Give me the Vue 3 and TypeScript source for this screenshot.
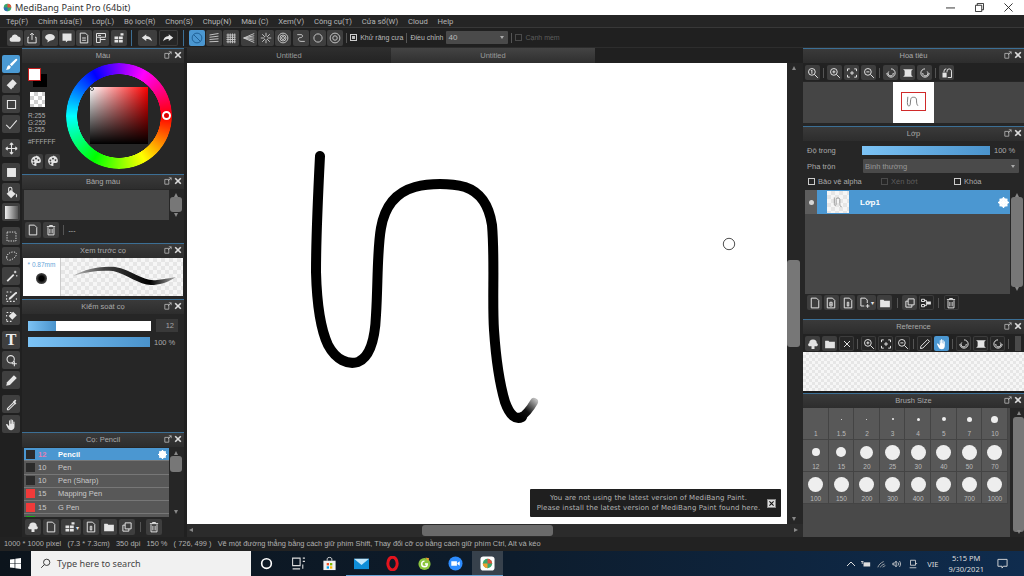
<script setup lang="ts">
import { h } from 'vue'

type IconDef = { f?: string; s?: string; dash?: boolean }
const icons: Record<string, IconDef> = {
  brush: { f: 'M14 1c1 0 1.5 1 1 1.7L8.2 10 6 7.8 13 1.3zM5.2 8.8l2 2c-.5 2.7-3 4.2-6.2 3.7 1.6-1 1-2.2 2-4 .4-1 1.200-1.700 2.200-1.700z' },
  eraser: { f: 'M9.500 1.500 14.500 6.500 7.500 14 2 9z', s: 'M5 6l5.500 5.500' },
  rect: { s: 'M3 3h10v10H3z' },
  check: { s: 'M1.500 8.500 6 13 14.500 3', },
  move: { s: 'M8 1v14M1 8h14M8 1 6 3.500M8 1l2 2.500M8 15l-2-2.500M8 15l2-2.500M1 8l2.500-2M1 8l2.500 2M15 8l-2.500-2M15 8l-2.500 2' },
  fillrect: { f: 'M2.500 2.500h11v11h-11z' },
  bucket: { f: 'M7 5 13 9.500 7.500 15 2 9.500z', s: 'M4.500 7V3.500a2 2 0 0 1 4 0V8M13.500 10c1 1.500 1.200 3 0 3.500' },
  grad: { f: 'M2 2h12v12H2z' },
  dotrect: { s: 'M2.500 2.500h11v11h-11z', dash: true },
  dotlasso: { s: 'M2 9c0-3 3-6 7-6.500 3-.4 5.500.5 5 3-.5 3-4 6-8 7-3 .5-4-1-4-3.500z', dash: true },
  wand: { f: 'M2 13 10 5l1.500 1.500-8 8z', s: 'M12.500 1v3M11 2.500h3M14.500 6v2' },
  selpen: { s: 'M2 2.500h2M6 2.500h2M2 6v2M2 10v2M2 14h2M6 14h2M10 14h2M14 10v2M14 2.500v2', f: 'M13 2.500 14.500 4 7 11.500 4.500 12l.5-2.500z' },
  seler: { s: 'M2 3h2M6 3h2M2 6v2M2 11v2M2 14h2M6 14h2', f: 'M10 2l4.500 4.500L9 12 4.500 7.500z' },
  shapesel: { s: 'M7 2a4.500 4.500 0 1 0 0 9 4.500 4.500 0 1 0 0-9zM11.500 9v6M8.500 12h6' },
  blur: { f: 'M11 1.500 14.500 5 6 13.500 1.500 14.500 2.500 10z' },
  drop: { s: 'M11 5 3 13v1.500H4.500L12.500 6.500', f: 'M9.500 5 11 3.500 12 2.500c1-1 2.500.5 1.500 1.500l-1 1L14 6.500 12.500 8z' },
  hand: { f: 'M5 7V3.500c0-1 1.300-1 1.300 0V7h.5V2.200c0-1 1.400-1 1.400 0V7h.5V3c0-1 1.300-1 1.300 0v4.500h.4V5c0-1 1.300-1 1.300 0v5.500c0 2.500-1.500 4.500-4 4.500s-3.500-1-4.500-3L1.500 8.500c-.5-1 .8-1.700 1.500-.8L5 10z' },
  cloud: { f: 'M4 13a3 3 0 0 1-.5-6 4.500 4.500 0 0 1 8.500-1 3.500 3.500 0 0 1 0 7z' },
  share: { s: 'M4 7H2.500v7.500h11V7H12M8 10.500V2M5.500 4 8 1.500 10.500 4' },
  bubble: { f: 'M8 2.500c3.500 0 6.500 2 6.500 4.500s-3 4.500-6.500 4.500l-3.500 2.500.5-3C3 10 1.500 8.500 1.500 7c0-2.500 3-4.500 6.500-4.500z' },
  chat: { f: 'M2 2h12v9.500H9L6.500 14v-2.500H2z' },
  doc: { s: 'M3 1.500h7l3 3v10H3zM5.500 8h5M5.500 11h5' },
  panel: { s: 'M2 2h12v5H2zM2 7v7h5V7M7 10h7M4 4.500h4' },
  grid2: { f: 'M2 6h5v3.500H2zM8 6h5v3.500H8zM2 10.500h5V14H2zM8 10.500h5V14H8zM10 1.500h4v3h-4z' },
  undo: { f: 'M7 3 1 7.500 7 12V9.300c3 0 5.500.7 7.500 3-.5-4-3-6.800-7.500-7z' },
  redo: { f: 'M9 3l6 4.500L9 12V9.300c-3 0-5.500.7-7.500 3 .5-4 3-6.800 7.500-7z' },
  none: { s: 'M8 1.500a6.500 6.500 0 1 0 0 13 6.500 6.500 0 1 0 0-13zM3.500 3.500l9 9' },
  lines: { s: 'M2 4l12-2M2 7l12-1.500M2 10l12-1M2 13l12-.5' },
  gridr: { s: 'M2 4h12M2 7h12M2 10h12M2 13h12M4 2v13M7 2v13M10 2v13M13 2v13' },
  fan: { s: 'M1 8 15 2M1 8l14-3M1 8h14M1 8l14 3M1 8l14 6' },
  burst: { s: 'M8 1v5M8 10v5M1 8h5M10 8h5M3 3l3.500 3.500M9.500 9.500 13 13M13 3 9.500 6.500M6.500 9.500 3 13' },
  conc: { s: 'M8 1.500a6.500 6.500 0 1 0 0 13 6.500 6.500 0 1 0 0-13zM8 4a4 4 0 1 0 0 8 4 4 0 1 0 0-8zM8 6a2 2 0 1 0 0 4 2 2 0 1 0 0-4z' },
  curve: { s: 'M3 3.500h5c3 0 3 4-1 4s-3 5 1 5h5M3 3.500h.1M13 12.500h.1' },
  ring: { s: 'M8 2.500a5.500 5.500 0 1 0 0 11 5.500 5.500 0 1 0 0-11z' },
  gear: { s: 'M8 1.500a6.500 6.500 0 1 0 0 13 6.500 6.500 0 1 0 0-13zM8 5a3 3 0 1 0 0 6 3 3 0 1 0 0-6z' },
  palette: { f: 'M8 1.500C4 1.500 1.500 4.500 1.500 8s3 6.500 6 6.500c1.500 0 1.500-1 1-2-.5-1.200.2-2 1.500-2h2c1.500 0 2.500-1 2.500-3 0-3.500-3-6.500-6.500-6.500zM4.500 6a1.200 1.200 0 1 0 .01 0zM8 3.500a1.200 1.200 0 1 0 .01 0zM11.300 5.500a1.200 1.200 0 1 0 .01 0zM4.800 9.800a1.200 1.200 0 1 0 .01 0z' },
  page: { s: 'M3 1.500h7l3 3v10H3z' },
  trash: { s: 'M4 4.500v10h8v-10M2.500 3.500h11M6 3.500V2h4v1.500M6.500 6.500v6M9.500 6.500v6' },
  folder: { f: 'M1.500 4V13.500h13V5H7L6 3.500H2z' },
  copy: { s: 'M5.500 2.500h8v8h-8zM5.500 5.500h-3v8h8v-3' },
  up: { f: 'M3 7a5 5 0 0 1 10 0c2 .3 2 4-.5 4H10v3.500H6V11H3.500C1 11 1 7.300 3 7z' },
  zoomfit: { s: 'M6.500 2a4.500 4.500 0 1 0 0 9 4.500 4.500 0 1 0 0-9zM10 10l4.500 4.500M5.500 5l1-1v5' },
  zoomin: { s: 'M6.500 2a4.500 4.500 0 1 0 0 9 4.500 4.500 0 1 0 0-9zM10 10l4.500 4.500M4.500 6.500h4M6.500 4.500v4' },
  zoomout: { s: 'M6.500 2a4.500 4.500 0 1 0 0 9 4.500 4.500 0 1 0 0-9zM10 10l4.500 4.500M4.500 6.500h4' },
  fit: { s: 'M2 5.500V2.500h3M11 2.500h3v3M14 10.500v3h-3M5 13.500H2v-3M5.500 8h5M8 5.500v5' },
  rotl: { s: 'M8 2.500a5.500 5.500 0 1 1-5.500 5.500M5 6a3.500 3.500 0 1 0 6 2' },
  flip: { f: 'M1.500 3h13l-2 2v6l2 2h-13l2-2V5z' },
  rotr: { s: 'M8 2.500a5.500 5.500 0 1 0 5.500 5.500M11 6a3.500 3.500 0 1 1-6 2' },
  flip2: { f: 'M2 7.500h5.500V14H2z', s: 'M9 14h5V5.500a3 3 0 0 0-6 0V7M4 7V5.500a3 3 0 0 1 3-3' },
  layer: { s: 'M3 1.500h7l3 3v10H3z M7 7l2 0v5H7z' },
  layer8: { s: 'M3 1.500h7l3 3v10H3zM6.500 7h3v5h-3zM6.500 9.500h3' },
  layeradd: { s: 'M2.500 1.500h6l2.500 2.500v4M2.500 1.500V12H7M11.500 9.500v5M9 12h5' },
  tree: { s: 'M2 3h4v3H2zM2 10h4v3H2zM6 4.500h2.500v7H6', f: 'M9 6h5.500v4H9z' },
  close: { s: 'M4 4l8 8M12 4l-8 8' },
  pen2: { s: 'M11.500 2 14 4.500 5 13.500 2 14l.5-3z' },
}

const Ico = (props: { n: string }) => {
  const d = icons[props.n] ?? {}
  const kids = []
  if (d.f) kids.push(h('path', { d: d.f, fill: 'currentColor', 'fill-rule': 'evenodd' }))
  if (d.s) kids.push(h('path', { d: d.s, fill: 'none', stroke: 'currentColor', 'stroke-width': d.dash ? 1.1 : 1.3, 'stroke-dasharray': d.dash ? '1.6 1.4' : undefined }))
  return h('svg', { viewBox: '0 0 16 16', class: 'ico' }, kids)
}
Ico.props = ['n']

const menus = ['Tệp(F)', 'Chỉnh sửa(E)', 'Lớp(L)', 'Bộ lọc(R)', 'Chọn(S)', 'Chụp(N)', 'Màu (C)', 'Xem(V)', 'Công cụ(T)', 'Cửa sổ(W)', 'Cloud', 'Help']
const topA = ['cloud', 'share', 'bubble', 'chat', 'doc', 'panel', 'grid2']
const topB = ['none', 'lines', 'gridr', 'fan', 'burst', 'conc', 'curve', 'ring', 'gear']
const toolGroups = [
  ['brush', 'eraser', 'rect', 'check'],
  ['move'],
  ['fillrect', 'bucket', 'grad'],
  ['dotrect', 'dotlasso', 'wand', 'selpen', 'seler'],
  ['T', 'shapesel', 'blur'],
  ['drop', 'hand'],
]
const brushes = [
  { c: '#2b2b2b', n: '12', t: 'Pencil', on: true },
  { c: '#2b2b2b', n: '10', t: 'Pen', on: false },
  { c: '#2b2b2b', n: '10', t: 'Pen (Sharp)', on: false },
  { c: '#f03a3a', n: '15', t: 'Mapping Pen', on: false },
  { c: '#f03a3a', n: '15', t: 'G Pen', on: false },
  { c: '#1ea51e', n: '40', t: 'Edge Pen', on: false },
]
const sizes: [string, number][] = [
  ['1', 0], ['1.5', 1], ['2', 1], ['3', 2], ['4', 3], ['5', 4], ['7', 5], ['10', 7],
  ['12', 8], ['15', 10], ['20', 13], ['25', 15], ['30', 15], ['40', 15], ['50', 15], ['70', 15],
  ['100', 15], ['150', 15], ['200', 15], ['300', 15], ['400', 15], ['500', 15], ['700', 15], ['1000', 15],
]
</script>

<template>
  <div class="app">
    <div class="title">
      <svg class="logo" viewBox="0 0 12 12"><circle cx="6" cy="6" r="5" fill="#3aa76d" /><path d="M6 1a5 5 0 0 1 5 5H6z" fill="#e0533d" /><path d="M1 6a5 5 0 0 0 5 5V6z" fill="#2f6fb5" /></svg>
      <span>MediBang Paint Pro (64bit)</span>
      <div class="winbtns">
        <svg viewBox="0 0 10 10"><path d="M0 5.500h10" stroke="#222" fill="none" /></svg>
        <svg viewBox="0 0 10 10"><path d="M.5 2.500h7v7h-7zM2.500 2.500v-2h7v7h-2" stroke="#222" fill="none" /></svg>
        <svg viewBox="0 0 10 10"><path d="M.5.500l9 9M9.500.500l-9 9" stroke="#222" fill="none" /></svg>
      </div>
    </div>

    <div class="menu"><span v-for="m in menus" :key="m">{{ m }}</span></div>

    <div class="toolbar">
      <div class="tgroup first"><button v-for="i in topA" :key="i" class="tb"><Ico :n="i" /></button></div>
      <i class="vsep s1" />
      <div class="tgroup undo"><button class="tb wide"><Ico n="undo" /></button><button class="tb wide dark"><Ico n="redo" /></button></div>
      <i class="vsep" />
      <div class="tgroup"><button v-for="(i, k) in topB" :key="i" class="tb lite" :class="{ on: k === 0 }"><Ico :n="i" /></button></div>
      <i class="vsep thin" />
      <span class="chk x" /><span class="tlabel">Khử răng cưa</span>
      <i class="vsep thin" />
      <span class="tlabel">Điều chỉnh</span>
      <div class="select topsel"><span>40</span><b /></div>
      <i class="vsep thin" />
      <span class="chk dim" /><span class="tlabel dimtxt">Cạnh mềm</span>
    </div>

    <div class="body">
      <div class="tools">
        <div v-for="(g, gi) in toolGroups" :key="gi" class="toolgroup">
          <button v-for="t in g" :key="t" class="tool" :class="{ on: t === 'brush' }">
            <span v-if="t === 'T'" class="tee">T</span>
            <span v-else-if="t === 'grad'" class="gradbox" />
            <Ico v-else :n="t" />
          </button>
        </div>
      </div>

      <div class="leftcol">
        <section class="panel p-color">
          <header class="phead">Màu<em class="pctl"><svg viewBox="0 0 10 10"><path d="M1 3h5v6H1V3M6 1l3 0v3M9 1 5 5" fill="none" stroke="#bbb" /></svg><svg viewBox="0 0 10 10"><path d="M1.500 1.500l7 7M8.500 1.500l-7 7" stroke="#ddd" stroke-width="2" /></svg></em></header>
          <div class="colorbody">
            <div class="colorleft">
              <div class="swatches"><span class="bgc" /><span class="fgc" /></div>
              <span class="transp checker" />
              <div class="rgb">R:255<br />G:255<br />B:255</div>
              <div class="hex">#FFFFFF</div>
              <div class="palbtns"><button class="tb"><Ico n="palette" /></button><button class="tb"><Ico n="palette" /></button></div>
            </div>
            <div class="wheel">
              <div class="ring" />
              <div class="sv"><span class="svh" /></div>
              <span class="hue" />
            </div>
          </div>
        </section>

        <section class="panel p-swatch">
          <header class="phead">Bảng màu<em class="pctl"><svg viewBox="0 0 10 10"><path d="M1 3h5v6H1V3M6 1l3 0v3M9 1 5 5" fill="none" stroke="#bbb" /></svg><svg viewBox="0 0 10 10"><path d="M1.500 1.500l7 7M8.500 1.500l-7 7" stroke="#ddd" stroke-width="2" /></svg></em></header>
          <div class="swrow">
            <div class="well" />
            <div class="vbar small"><u class="ua" /><span class="thumb th-sw" /><u class="da" /></div>
          </div>
          <div class="btnrow"><button class="tb"><Ico n="page" /></button><button class="tb"><Ico n="trash" /></button><i class="vsep thin" /><span class="dash">---</span></div>
        </section>

        <section class="panel p-prev">
          <header class="phead">Xem trước cọ<em class="pctl"><svg viewBox="0 0 10 10"><path d="M1 3h5v6H1V3M6 1l3 0v3M9 1 5 5" fill="none" stroke="#bbb" /></svg><svg viewBox="0 0 10 10"><path d="M1.500 1.500l7 7M8.500 1.500l-7 7" stroke="#ddd" stroke-width="2" /></svg></em></header>
          <div class="prev">
            <div class="prevl"><span>* 0.87mm</span><i class="dot" /></div>
            <div class="prevr checker-l">
              <svg viewBox="0 0 122 38">
                <defs><linearGradient id="bg" x1="0" x2="1"><stop offset="0" stop-color="#bbb" /><stop offset=".3" stop-color="#444" /><stop offset=".75" stop-color="#000" /><stop offset="1" stop-color="#aaa" /></linearGradient></defs>
                <path d="M12 18C24 11 40 8 54 9 72 12 82 24 96 22 104 21 110 20 115 19 106 25 98 27 90 27 78 27 66 16 52 13 38 12 24 14 12 18z" fill="url(#bg)" />
              </svg>
            </div>
          </div>
        </section>

        <section class="panel p-ctrl">
          <header class="phead">Kiểm soát cọ<em class="pctl"><svg viewBox="0 0 10 10"><path d="M1 3h5v6H1V3M6 1l3 0v3M9 1 5 5" fill="none" stroke="#bbb" /></svg><svg viewBox="0 0 10 10"><path d="M1.500 1.500l7 7M8.500 1.500l-7 7" stroke="#ddd" stroke-width="2" /></svg></em></header>
          <div class="ctlrow"><div class="slider white"><span style="width: 23%" /></div><span class="valbox">12</span></div>
          <div class="ctlrow"><div class="slider"><span style="width: 100%" /></div><span class="pct">100 %</span></div>
        </section>

        <section class="panel p-brush">
          <header class="phead">Cọ: Pencil<em class="pctl"><svg viewBox="0 0 10 10"><path d="M1 3h5v6H1V3M6 1l3 0v3M9 1 5 5" fill="none" stroke="#bbb" /></svg><svg viewBox="0 0 10 10"><path d="M1.500 1.500l7 7M8.500 1.500l-7 7" stroke="#ddd" stroke-width="2" /></svg></em></header>
          <div class="swrow brushwrap">
            <div class="blist">
              <div v-for="b in brushes" :key="b.t" class="brow" :class="{ on: b.on }">
                <i class="bchip" :style="{ background: b.c }" /><span class="bn">{{ b.n }}</span><span class="bt">{{ b.t }}</span>
                <svg v-if="b.on" class="bgear" viewBox="0 0 10 10"><circle cx="5" cy="5" r="3" fill="none" stroke="#fff" stroke-width="2.200" /><path d="M5 0v10M0 5h10M1.500 1.500l7 7M8.500 1.500l-7 7" stroke="#fff" stroke-width="1.300" /></svg>
              </div>
            </div>
            <div class="vbar small"><u class="ua" /><span class="thumb th-br" /><u class="da" /></div>
          </div>
          <div class="btnrow brow2">
            <button class="tb"><Ico n="up" /></button><button class="tb"><Ico n="page" /></button><button class="tb wide2"><Ico n="grid2" /><small>▾</small></button><button class="tb"><Ico n="layer" /></button><button class="tb"><Ico n="folder" /></button><button class="tb"><Ico n="copy" /></button><i class="vsep thin" /><button class="tb"><Ico n="trash" /></button>
          </div>
        </section>
      </div>

      <div class="center">
        <div class="tabs"><div class="tab">Untitled</div><div class="tab lit">Untitled</div></div>
        <div class="canvasrow">
          <div class="canvas">
            <svg viewBox="187 63 600 461" class="art">
              <defs><linearGradient id="fade" gradientUnits="userSpaceOnUse" x1="520" y1="418" x2="536" y2="400"><stop offset="0" stop-color="#000" /><stop offset=".4" stop-color="#111" /><stop offset="1" stop-color="#bbb" /></linearGradient></defs>
              <path d="M320 156C318 195 316 240 316 272 317 310 321 330 328 345 336 360 348 365 358 362 370 357 375 340 376 315 378 285 377 250 381 228 385 205 397 192 415 187 430 183 450 183 465 187 480 192 489 205 492 225 495 260 492 300 494 330 496 360 500 385 505 402 510 416 516 420 522 417" fill="none" stroke="#000" stroke-width="10" stroke-linecap="round" stroke-linejoin="round" />
              <path d="M520 418C526 414 530 409 534 402" fill="none" stroke="url(#fade)" stroke-width="8" stroke-linecap="round" />
              <circle cx="729" cy="244" r="5.700" fill="none" stroke="#222" stroke-width=".8" />
            </svg>
            <div class="toast">
              <div class="toasttxt">You are not using the latest version of MediBang Paint.<br />Please install the latest version of MediBang Paint found here.</div>
              <span class="toastx"><svg viewBox="0 0 10 10"><path d="M2 2l6 6M8 2l-6 6" stroke="#111" stroke-width="1.500" /></svg></span>
            </div>
          </div>
          <div class="vbar canvasv"><u class="ua" /><span class="thumb th-cv" /><u class="da" /></div>
        </div>
        <div class="hbar"><span class="la" /><span class="hthumb" /><span class="ra" /></div>
      </div>

      <div class="rightcol">
        <section class="panel r-nav">
          <header class="phead">Hoa tiêu<em class="pctl"><svg viewBox="0 0 10 10"><path d="M1 3h5v6H1V3M6 1l3 0v3M9 1 5 5" fill="none" stroke="#bbb" /></svg><svg viewBox="0 0 10 10"><path d="M1.500 1.500l7 7M8.500 1.500l-7 7" stroke="#ddd" stroke-width="2" /></svg></em></header>
          <div class="rtool">
            <button class="tb"><Ico n="zoomfit" /></button><i class="vsep thin" />
            <button class="tb"><Ico n="zoomin" /></button><button class="tb"><Ico n="fit" /></button><button class="tb"><Ico n="zoomout" /></button><i class="vsep thin" />
            <button class="tb"><Ico n="rotl" /></button><button class="tb"><Ico n="flip" /></button><button class="tb"><Ico n="rotr" /></button><i class="vsep thin" />
            <button class="tb"><Ico n="flip2" /></button>
          </div>
          <div class="navview">
            <div class="thumbpage">
              <div class="redbox"><svg viewBox="0 0 24 18"><path d="M6 4 5.500 10c0 4 2 5 3 2.500L9 7c.5-2 1-2.500 3-2.500s3 .5 3.200 3c0 3 .3 5 1.500 6" fill="none" stroke="#777" /></svg></div>
            </div>
          </div>
        </section>

        <section class="panel r-layer">
          <header class="phead">Lớp<em class="pctl"><svg viewBox="0 0 10 10"><path d="M1 3h5v6H1V3M6 1l3 0v3M9 1 5 5" fill="none" stroke="#bbb" /></svg><svg viewBox="0 0 10 10"><path d="M1.500 1.500l7 7M8.500 1.500l-7 7" stroke="#ddd" stroke-width="2" /></svg></em></header>
          <div class="lrow"><span class="ll">Độ trong</span><div class="slider op"><span style="width: 100%" /></div><span class="pct">100 %</span></div>
          <div class="lrow"><span class="ll">Pha trộn</span><div class="select blend"><span>Bình thường</span><b /></div></div>
          <div class="lchecks">
            <span class="lc"><span class="chk" />Bảo vệ alpha</span>
            <span class="lc dimtxt"><span class="chk dim" />Xén bớt</span>
            <span class="lc"><span class="chk" />Khóa</span>
          </div>
          <div class="layerwrap">
            <div class="layers">
              <div class="layerrow">
                <div class="eye"><i /></div>
                <div class="lblue">
                  <div class="lthumb checker-l"><svg viewBox="0 0 24 24"><path d="M8 7v7c0 3 2 2 2 0V9c0-2 4-2 4 0v5c0 2 1 4 2 3" fill="none" stroke="#999" /></svg></div>
                  <b>Lớp1</b>
                  <svg class="lgear" viewBox="0 0 10 10"><circle cx="5" cy="5" r="3" fill="none" stroke="#fff" stroke-width="2.200" /><path d="M5 0v10M0 5h10M1.500 1.500l7 7M8.500 1.500l-7 7" stroke="#fff" stroke-width="1.300" /></svg>
                </div>
              </div>
            </div>
            <div class="vbar lv"><u class="ua" /><span class="thumb th-ly" /><u class="da" /></div>
          </div>
          <div class="btnrow lbtns">
            <button class="tb"><Ico n="page" /></button><button class="tb"><Ico n="layer8" /></button><button class="tb"><Ico n="layer" /></button><button class="tb wide2"><Ico n="layeradd" /><small>▾</small></button><button class="tb"><Ico n="folder" /></button><i class="vsep thin" /><button class="tb"><Ico n="copy" /></button><button class="tb dark"><Ico n="tree" /></button><i class="vsep thin" /><button class="tb dark"><Ico n="trash" /></button>
          </div>
        </section>

        <section class="panel r-ref">
          <header class="phead">Reference<em class="pctl"><svg viewBox="0 0 10 10"><path d="M1 3h5v6H1V3M6 1l3 0v3M9 1 5 5" fill="none" stroke="#bbb" /></svg><svg viewBox="0 0 10 10"><path d="M1.500 1.500l7 7M8.500 1.500l-7 7" stroke="#ddd" stroke-width="2" /></svg></em></header>
          <div class="rtool reft">
            <button class="tb"><Ico n="up" /></button><button class="tb"><Ico n="folder" /></button><button class="tb dark"><Ico n="close" /></button><i class="vsep thin" />
            <button class="tb dark"><Ico n="zoomin" /></button><button class="tb dark"><Ico n="fit" /></button><button class="tb dark"><Ico n="zoomout" /></button><i class="vsep thin" />
            <button class="tb dark"><Ico n="pen2" /></button><button class="tb on"><Ico n="hand" /></button><i class="vsep thin" />
            <button class="tb dark"><Ico n="rotl" /></button><button class="tb dark"><Ico n="flip" /></button><button class="tb dark"><Ico n="rotr" /></button><i class="vsep thin" />
            <span class="refgrip" />
          </div>
          <div class="refview checker-l" />
        </section>

        <section class="panel r-size">
          <header class="phead">Brush Size<em class="pctl"><svg viewBox="0 0 10 10"><path d="M1 3h5v6H1V3M6 1l3 0v3M9 1 5 5" fill="none" stroke="#bbb" /></svg><svg viewBox="0 0 10 10"><path d="M1.500 1.500l7 7M8.500 1.500l-7 7" stroke="#ddd" stroke-width="2" /></svg></em></header>
          <div class="sizewrap">
            <div class="sizebg">
              <div class="sizes">
                <div v-for="s in sizes" :key="s[0]" class="sz">
                  <span class="szd"><i :style="{ width: s[1] + 'px', height: s[1] + 'px' }" /></span>
                  <span class="szl">{{ s[0] }}</span>
                </div>
              </div>
            </div>
            <div class="vbar szv"><u class="ua" /><span class="thumb th-sz" /><u class="da" /></div>
          </div>
        </section>
      </div>
    </div>

    <div class="status">1000 * 1000 pixel &nbsp; (7.3 * 7.3cm) &nbsp; 350 dpi &nbsp; 150 % &nbsp; ( 726, 499 ) &nbsp; Vẽ một đường thẳng bằng cách giữ phím Shift, Thay đổi cỡ cọ bằng cách giữ phím Ctrl, Alt và kéo</div>

    <div class="taskbar">
      <div class="winlogo"><svg viewBox="0 0 12 12"><path d="M0 1.700 5 1v4.600H0zM5.800.9 12 0v5.600H5.800zM0 6.400h5V11L0 10.300zM5.800 6.400H12V12l-6.200-.9z" fill="#fff" /></svg></div>
      <div class="search">
        <svg viewBox="0 0 14 14"><circle cx="8.500" cy="5.500" r="4" fill="none" stroke="#222" stroke-width="1.100" /><path d="M5.500 8.500 1.500 12.500" stroke="#222" stroke-width="1.100" /></svg>
        <span>Type here to search</span>
      </div>
      <div class="apps">
        <span class="app0"><svg viewBox="0 0 14 14"><circle cx="7" cy="7" r="4.500" fill="none" stroke="#fff" stroke-width="1.500" /></svg></span>
        <span class="app0"><svg viewBox="0 0 14 14"><path d="M1.500 2h7v7h-7zM1.500 12h7M11 2h2M11 5h2M11 12V8" fill="none" stroke="#ddd" /></svg></span>
        <span class="app0"><svg viewBox="0 0 16 16"><path d="M1.500 5h13v10h-13z" fill="#f2f2f2" /><path d="M5.500 5V3c0-2 5-2 5 0v2" fill="none" stroke="#ddd" /><path d="M5 7.500h2.500V10H5z" fill="#f25022" /><path d="M8.500 7.500H11V10H8.500z" fill="#7fba00" /><path d="M5 11h2.500v2.500H5z" fill="#00a4ef" /><path d="M8.500 11H11v2.500H8.500z" fill="#ffb900" /></svg></span>
        <span class="app0 run"><svg viewBox="0 0 16 16"><path d="M0 3h16v11H0z" fill="#0f8ed8" /><path d="M0 3h16L8 9.500z" fill="#bfe6fb" /></svg></span>
        <span class="app0 run"><svg viewBox="0 0 16 16"><ellipse cx="8" cy="8" rx="5" ry="6.800" fill="none" stroke="#e3141e" stroke-width="3.200" /></svg></span>
        <span class="app0 run"><svg viewBox="0 0 16 16"><circle cx="8" cy="8.500" r="6.500" fill="#8cc63f" /><path d="M8 5.500a3 3 0 1 0 3 3H8.500" fill="none" stroke="#fff" stroke-width="1.500" /><path d="M9 1.500l4 1-1 3z" fill="#f0a030" /></svg></span>
        <span class="app0 run"><svg viewBox="0 0 16 16"><circle cx="8" cy="8" r="7.500" fill="#2d8cff" /><path d="M3.500 5.500h6v5h-6zM10 7.500l2.500-1.800v4.600L10 8.500z" fill="#fff" /></svg></span>
        <span class="app0 run act"><svg viewBox="0 0 16 16"><rect x="0.500" y="0.500" width="15" height="15" rx="3" fill="#fff" /><circle cx="8" cy="8" r="5" fill="#3aa76d" /><path d="M8 3a5 5 0 0 1 5 5H8z" fill="#e0533d" /><path d="M3 8a5 5 0 0 0 5 5V8z" fill="#f0a030" /></svg></span>
      </div>
      <div class="tray">
        <svg class="tr" viewBox="0 0 10 10"><path d="M1 7l4-4 4 4" fill="none" stroke="#ddd" /></svg>
        <svg class="tr" viewBox="0 0 12 10"><path d="M3 3h8v5H3z" fill="#ddd" /><path d="M0 2h3M1.500 2v3" stroke="#ddd" /></svg>
        <svg class="tr" viewBox="0 0 12 10"><path d="M1 9c1-3 3-5 7-7M4 9c1-2 2-3 5-4M7 9c0-1 1-1 3-2" fill="none" stroke="#bbb" /></svg>
        <svg class="tr" viewBox="0 0 12 10"><path d="M1 4h2l2-2.500v7L3 6H1zM7 3c1 1 1 3 0 4M9 1.500c1.500 2 1.500 5 0 7" fill="none" stroke="#ddd" /></svg>
        <svg class="tr" viewBox="0 0 10 12"><path d="M2 1.500h6v6H2zM1 10.500h8M8 5.500h2" fill="none" stroke="#ddd" /></svg>
        <span class="lang">VIE</span>
        <div class="clock"><span>5:15 PM</span><span>9/30/2021</span></div>
        <svg class="note" viewBox="0 0 12 12"><path d="M1 1.500h10v7.500H7L5.500 11V9H1z" fill="none" stroke="#ddd" /></svg>
      </div>
    </div>
  </div>
</template>

<style>
html, body { margin: 0; padding: 0; background: #1e1e1e; }
</style>

<style scoped>
.app { width: 1024px; height: 576px; overflow: hidden; display: flex; flex-direction: column; font-family: "Liberation Sans", Arial, sans-serif; font-size: 8px; color: #b9b9b9; background: #202020; }
button { padding: 0; border: 0; font: inherit; color: inherit; display: flex; align-items: center; justify-content: center; }
.ico { width: 12px; height: 12px; display: block; }
i, em, u { font-style: normal; text-decoration: none; display: block; }

.title { height: 15px; background: #fff; display: flex; align-items: center; padding-left: 3px; gap: 3px; color: #333; font-size: 9.200px; flex: none; font-family: "Noto Sans", sans-serif; }
.logo { width: 9px; height: 9px; }
.winbtns { margin-left: auto; display: flex; gap: 20px; margin-right: 11px; }
.winbtns svg { width: 9px; height: 9px; display: block; }

.menu { height: 12px; flex: none; background: #252525; border-bottom: 1px solid #383838; display: flex; align-items: center; gap: 9.800px; padding-left: 6px; font-family: Roboto, sans-serif; font-size: 7.700px; color: #b5b5b5; white-space: nowrap; }

.toolbar { height: 19px; flex: none; background: #202020; display: flex; align-items: center; padding-left: 6px; white-space: nowrap; border-bottom: 1px solid #2d2d2d; }
.tgroup { display: flex; gap: 1.300px; }
.tgroup.first { padding-left: 1px; }
.tgroup.undo { gap: 2px; }
.tb { width: 16px; height: 16px; background: #3e3e3e; color: #e4e4e4; border-radius: 2px; flex: none; }
.tb.lite { color: #c4c4c4; }
.tb.wide { width: 19px; }
.tb.dark { background: #262626; box-shadow: inset 0 0 0 1px #3c3c3c; }
.tb.on { background: #4b97d1; color: #1f5f94; }
.r-ref .tb.on { color: #fff; }
.tb.wide2 { width: 20px; gap: 0; }
.tb.wide2 small { font-size: 6px; }
.vsep { width: 1px; height: 16px; background: #3d6e93; margin: 0 5px; flex: none; }
.vsep.s1 { margin: 0 6px 0 4px; }
.vsep.thin { height: 10px; background: #555; margin: 0 3px; }
.chk { width: 7px; height: 7px; border: 1px solid #ccc; display: inline-block; flex: none; box-sizing: border-box; margin: 0 3px; }
.toolbar .chk { margin: 0 3px 0 0; }
.chk.x { background: linear-gradient(#bbb, #bbb) center / 3px 3px no-repeat; }
.chk.dim { border-color: #4a4a4a; }
.tlabel { font-size: 7px; color: #bbb; }
.dimtxt { color: #5d5d5d !important; }
.select { background: #4a4a4a; display: flex; align-items: center; justify-content: space-between; padding: 0 4px 0 2px; border-radius: 1px; position: relative; box-sizing: border-box; }
.select b { width: 0; height: 0; border-left: 2.500px solid transparent; border-right: 2.500px solid transparent; border-top: 3px solid #aaa; }
.topsel { width: 62px; height: 13px; margin-left: 3px; }

.body { flex: 1; min-height: 0; display: flex; }
.tools { width: 22px; flex: none; padding: 7px 0 0 2px; box-sizing: border-box; display: flex; flex-direction: column; gap: 6px; }
.toolgroup { display: flex; flex-direction: column; gap: 2px; }
.tool { width: 18px; height: 18px; background: #3f3f3f; color: #e6e6e6; border-radius: 2px; }
.tool.on { background: #4a9ad4; color: #fff; }
.tool .ico { width: 13px; height: 13px; }
.tee { font-family: "Liberation Serif", serif; font-weight: 700; font-size: 16px; line-height: 18px; color: #eee; }
.gradbox { width: 13px; height: 13px; background: linear-gradient(90deg, #eee, #555); }

.leftcol { width: 162px; flex: none; display: flex; flex-direction: column; }
.panel { border-top: 1px solid #3c6f95; background: #262626; box-sizing: border-box; position: relative; flex: none; }
.phead { height: 14px; background: linear-gradient(#3a3a3a, #2d2d2d); text-align: center; line-height: 14px; font-size: 7.500px; font-weight: 400; color: #a9a9a9; position: relative; }
.pctl { position: absolute; right: 2px; top: 2px; display: flex; gap: 2px; }
.pctl svg { width: 8px; height: 8px; display: block; }

.p-color { height: 126px; }
.colorbody { display: flex; padding: 0 0 0 6px; }
.colorleft { width: 38px; flex: none; padding-top: 5px; }
.swatches { position: relative; width: 20px; height: 20px; }
.fgc { position: absolute; left: 0; top: 0; width: 13px; height: 13px; background: #fff; border: 1.500px solid #c61f1f; box-sizing: border-box; }
.bgc { position: absolute; left: 5px; top: 6px; width: 14px; height: 13px; background: #000; }
.transp { display: block; width: 15px; height: 15px; margin: 4px 0 0 2px; }
.checker { background: repeating-conic-gradient(#cfcfcf 0 25%, #fff 0 50%) 0 0 / 8px 8px; }
.checker-l { background: repeating-conic-gradient(#e6e6e6 0 25%, #f6f6f6 0 50%) 0 0 / 8px 8px; }
.rgb { font-size: 6.500px; line-height: 7.200px; margin-top: 5px; color: #aaa; }
.hex { font-size: 6.500px; margin-top: 4px; color: #aaa; line-height: 8px; }
.palbtns { display: flex; gap: 2px; margin-top: 8px; }
.palbtns .tb { width: 15px; height: 15px; }
.wheel { position: relative; width: 106px; height: 106px; flex: none; }
.ring { position: absolute; inset: 0; border-radius: 50%; background: conic-gradient(from 90deg, #f00, #ff0 60deg, #0f0 120deg, #0ff 180deg, #00f 240deg, #f0f 300deg, #f00 360deg); -webkit-mask: radial-gradient(circle, transparent 41.500px, #000 42px); mask: radial-gradient(circle, transparent 41.500px, #000 42px); }
.sv { position: absolute; left: 24px; top: 24px; width: 58px; height: 57px; background: linear-gradient(transparent, #000), linear-gradient(90deg, #fff, #f00); }
.svh { position: absolute; left: 0; top: 0; width: 4px; height: 4px; border-radius: 50%; border: 1px solid #555; box-sizing: border-box; background: #fff; }
.hue { position: absolute; right: 1px; top: 48px; width: 9px; height: 9px; border-radius: 50%; border: 2px solid #fff; box-sizing: border-box; background: #d00; }

.p-swatch { height: 69px; }
.swrow { display: flex; padding: 1px 2px 0 2px; gap: 1px; }
.well { width: 146px; height: 30px; background: #474747; }
.vbar { background: #262626; position: relative; display: flex; flex-direction: column; align-items: center; }
.vbar.small { width: 12px; height: 30px; }
.ua, .da { width: 0; height: 0; border-left: 2.500px solid transparent; border-right: 2.500px solid transparent; position: absolute; }
.ua { top: 3px; border-bottom: 4px solid #888; }
.da { bottom: 3px; border-top: 4px solid #888; }
.thumb { position: absolute; left: 0; right: 0; background: #777; border-radius: 3px; }
.th-sw { top: 7px; height: 15px; }
.btnrow { display: flex; align-items: center; gap: 1.500px; padding: 2px 0 0 3px; }
.dash { font-size: 7px; color: #bbb; }

.p-prev { height: 56px; }
.prev { margin: 0 1px; height: 38px; display: flex; background: #fff; }
.prevl { width: 38px; flex: none; border-right: 1px solid #ccc; box-sizing: border-box; display: flex; flex-direction: column; align-items: center; color: #6aa6d8; font-size: 6.500px; line-height: 9px; padding-top: 2px; }
.dot { width: 11px; height: 11px; border-radius: 50%; background: radial-gradient(circle, #000 30%, #333 55%, #666 90%, #fff 100%); margin-top: 4px; }
.prevr { flex: 1; min-width: 0; }
.prevr svg { width: 100%; height: 100%; display: block; }

.p-ctrl { height: 133px; }
.ctlrow { display: flex; align-items: center; padding-left: 6px; }
.phead + .ctlrow { padding-top: 5px; }
.slider { height: 10px; background: linear-gradient(90deg, #7cc3f5, #4a93cc); position: relative; }
.slider span { display: block; height: 100%; background: linear-gradient(90deg, #7cc3f5, #4a93cc); }
.slider.white { background: #fff; width: 123px; }
.ctlrow .slider:not(.white) { width: 122px; margin-top: 5px; }
.valbox { width: 22px; height: 13px; background: #393939; margin-left: 5px; text-align: right; padding-right: 4px; box-sizing: border-box; line-height: 13px; font-size: 7.500px; color: #a5a5a5; }
.pct { font-size: 7.500px; color: #aaa; margin-left: 4px; white-space: nowrap; }
.ctlrow .pct { margin-top: 5px; }

.p-brush { flex: 1; }
.brushwrap { padding-top: 1px; }
.blist { width: 146px; height: 69px; overflow: hidden; background: #555; }
.brow { height: 12.250px; box-sizing: content-box; display: flex; align-items: center; border-bottom: .500px solid #777; background: #585858; position: relative; color: #c9c9c9; font-size: 7.500px; }
.brow.on { background: #4b97d1; color: #fff; font-weight: 700; }
.bchip { width: 9px; height: 9px; margin-left: 2px; flex: none; }
.bn { width: 20px; margin-left: 3px; flex: none; }
.brow.on .bn { color: #e27fb4; }
.bgear { position: absolute; right: 2px; top: 2px; width: 9px; height: 9px; }
.brushwrap .vbar.small { height: 69px; }
.th-br { top: 8px; height: 16px; }
.brow2 { gap: 2px; padding: 2px 0 0 3px; }

.center { width: 616px; flex: none; display: flex; flex-direction: column; background: #262626; margin-left: 3px; }
.tabs { height: 15px; display: flex; flex: none; background: #202020; }
.tab { width: 204px; text-align: center; line-height: 15px; font-size: 7.500px; color: #999; background: linear-gradient(#2e2e2e, #232323); }
.tab.lit { background: linear-gradient(#444, #2f2f2f); }
.canvasrow { height: 461px; flex: none; display: flex; }
.canvas { width: 600px; flex: none; background: #fff; position: relative; overflow: hidden; }
.art { display: block; width: 600px; height: 461px; }
.toast { position: absolute; left: 343px; top: 426px; width: 251px; height: 28px; background: #1f1f1f; border-radius: 1px; display: flex; align-items: center; color: #b4b4b4; font-family: "DejaVu Sans", sans-serif; line-height: 10.500px; }
.toasttxt { flex: 1; text-align: center; letter-spacing: .1px; white-space: nowrap; font-size: 7px; }
.toastx { width: 9px; height: 9px; background: #ddd; border: 1px solid #888; margin-right: 5px; display: block; flex: none; box-sizing: border-box; }
.toastx svg { display: block; width: 100%; height: 100%; }
.vbar.canvasv { width: 13px; height: 461px; }
.th-cv { top: 197px; height: 87px; }
.hbar { height: 13px; position: relative; background: #2b2b2b; }
.hthumb { position: absolute; left: 235px; top: 1px; width: 131px; height: 11px; background: #6a6a6a; border-radius: 3px; }
.la { position: absolute; left: 2px; top: 4px; border-top: 2.500px solid transparent; border-bottom: 2.500px solid transparent; border-right: 4px solid #888; }
.ra { position: absolute; left: 607px; top: 4px; border-top: 2.500px solid transparent; border-bottom: 2.500px solid transparent; border-left: 4px solid #888; }

.rightcol { flex: 1; min-width: 0; display: flex; flex-direction: column; }
.r-nav { height: 78px; }
.rtool { height: 17px; display: flex; align-items: center; gap: 2px; padding: 1px 0 0 2px; background: #222; box-sizing: content-box; }
.rtool .tb { width: 15px; height: 15px; }
.rtool .vsep.thin { margin: 0 1px; }
.navview { height: 41px; margin-top: 1px; background: #454545; display: flex; justify-content: center; }
.thumbpage { width: 41px; height: 41px; background: #fff; display: flex; align-items: center; justify-content: center; }
.redbox { width: 25px; height: 19px; border: 1px solid #d02a2a; box-sizing: border-box; margin-top: -3px; }
.redbox svg { display: block; width: 100%; height: 100%; }

.r-layer { height: 193px; }
.lrow { display: flex; align-items: center; padding: 3px 0 0 4px; height: 12px; }
.lrow + .lrow { height: 14px; padding-top: 3px; }
.ll { width: 55px; flex: none; font-size: 7.500px; color: #aaa; }
.slider.op { width: 128px; height: 9px; }
.select.blend { width: 156px; height: 14px; margin-left: 1px; font-size: 7.500px; color: #999; }
.lchecks { display: flex; height: 14px; align-items: center; padding-left: 2px; margin-top: 1px; font-size: 7.500px; color: #aaa; }
.lc { display: flex; align-items: center; }
.lc:nth-child(1), .lc:nth-child(2) { width: 73px; }
.layerwrap { display: flex; padding: 2px 0 0 2px; }
.layers { width: 205px; height: 104px; background: #474747; }
.layerrow { display: flex; height: 24px; background: #5d5d5d; }
.eye { width: 12px; display: flex; align-items: center; justify-content: center; }
.eye i { width: 5px; height: 5px; border-radius: 50%; background: #d5d5d5; }
.lblue { flex: 1; background: #4b97d1; display: flex; align-items: center; position: relative; padding-left: 10px; color: #fff; font-size: 8px; }
.lthumb { width: 22px; height: 22px; margin-right: 11px; }
.lthumb svg { display: block; }
.lgear { position: absolute; right: 1px; top: 7px; width: 11px; height: 11px; }
.vbar.lv { width: 12px; height: 104px; margin-left: 1px; }
.th-ly { top: 7px; height: 90px; }
.lbtns { padding: 1px 0 0 4px; gap: 1.500px; }
.lbtns .tb { width: 15px; height: 15px; }
.lbtns .tb.wide2 { width: 19px; }

.r-ref { height: 74px; background: #1c1c1c; }
.reft { overflow: hidden; }
.refgrip { width: 6px; height: 15px; background: #4a4a4a; margin-left: 3px; }
.refview { height: 39px; background-size: 6px 6px; }

.r-size { flex: 1; }
.sizewrap { display: flex; }
.sizebg { width: 207px; height: 129px; background: #494949; flex: none; }
.sizes { display: grid; grid-template-columns: repeat(8, 25.600px); grid-auto-rows: 32px; }
.sz { background: #585858; box-shadow: inset -1px -1px 0 #444; display: flex; flex-direction: column; align-items: center; }
.szd { height: 22px; display: flex; align-items: center; justify-content: center; }
.szd i { background: #eee; border-radius: 50%; display: block; }
.sz:nth-child(n+9) .szd { padding-top: 1px; }
.szl { font-size: 6.500px; color: #bbb; line-height: 8px; }
.vbar.szv { width: 11px; height: 129px; margin-left: 3px; }
.th-sz { top: 9px; height: 115px; }

.status { height: 14px; flex: none; padding-left: 4px; background: #222; font-size: 7.420px; line-height: 14px; color: #b0b0b0; white-space: nowrap; overflow: hidden; }

.taskbar { height: 25px; flex: none; display: flex; align-items: center; background: linear-gradient(90deg, #0c141c, #0d1c2c 50%, #0f2c4e); font-family: "Noto Sans", sans-serif; }
.winlogo { width: 31px; display: flex; justify-content: center; flex: none; }
.winlogo svg { width: 11px; height: 11px; }
.search { width: 220px; height: 25px; background: #f1f1f1; display: flex; align-items: center; gap: 6px; padding-left: 9px; box-sizing: border-box; flex: none; color: #444; font-size: 9.100px; }
.search svg { width: 11px; height: 11px; }
.apps { display: flex; }
.app0 { width: 31.500px; height: 25px; display: flex; align-items: center; justify-content: center; box-sizing: border-box; }
.app0 svg { width: 15px; height: 15px; display: block; }
.app0.run { border-bottom: 1.500px solid #6aa7d8; }
.app0.act { background: #37414c; }
.tray { margin-left: auto; display: flex; align-items: center; color: #ddd; padding-right: 16px; }
.tr { width: 10px; height: 10px; margin-right: 5.500px; }
.lang { font-size: 7.500px; margin: 0 10px 0 4px; }
.clock { display: flex; flex-direction: column; align-items: center; font-size: 7.500px; line-height: 11px; margin-right: 13px; }
.note { width: 11px; height: 11px; }
</style>
